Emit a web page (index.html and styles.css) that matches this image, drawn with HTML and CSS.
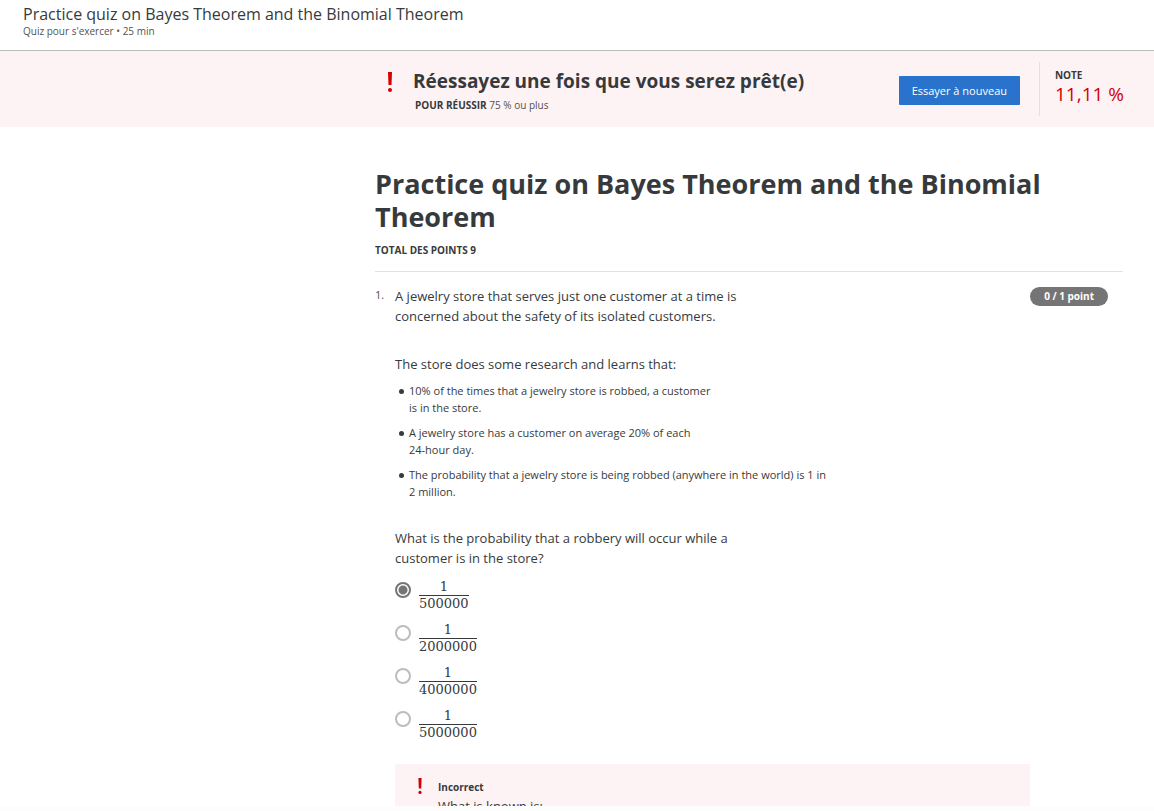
FILE: index.html
```html
<!DOCTYPE html>
<html lang="fr">
<head>
<meta charset="utf-8">
<meta name="viewport" content="width=device-width, initial-scale=1">
<title>Practice quiz on Bayes Theorem and the Binomial Theorem</title>
<link rel="stylesheet" href="styles.css">
</head>
<body class="page">
<header class="topbar">
  <div class="topbar-title">Practice quiz on Bayes Theorem and the Binomial Theorem</div>
  <div class="topbar-meta">Quiz pour s'exercer • 25 min</div>
</header>
<section class="banner">
  <svg class="banner-icon" viewBox="0 0 6 20" aria-hidden="true"><path d="M1 0h4l-.5 13h-3z"/><circle cx="3" cy="18" r="2"/></svg>
  <div class="banner-text">
    <h2 class="banner-title">Réessayez une fois que vous serez prêt(e)</h2>
    <p class="banner-goal"><strong class="banner-label">POUR RÉUSSIR</strong> <span>75 % ou plus</span></p>
  </div>
  <button class="retry" type="button">Essayer à nouveau</button>
  <div class="grade">
    <div class="grade-label">NOTE</div>
    <div class="grade-value">11,11 %</div>
  </div>
</section>
<main class="content">
  <h1 class="quiz-title">Practice quiz on Bayes Theorem and the Binomial Theorem</h1>
  <div class="total">TOTAL DES POINTS 9</div>
  <section class="question">
    <div class="number">1.</div>
    <div class="question-body">
      <div class="prompt" id="prompt">
        <p class="text">A jewelry store that serves just one customer at a time is<br>concerned about the safety of its isolated customers.</p>
        <p class="text text-spaced">The store does some research and learns that:</p>
        <ul class="facts">
          <li class="fact">10% of the times that a jewelry store is robbed, a customer<br>is in the store.</li>
          <li class="fact">A jewelry store has a customer on average 20% of each<br>24-hour day.</li>
          <li class="fact">The probability that a jewelry store is being robbed (anywhere in the world) is 1 in<br>2 million.</li>
        </ul>
        <p class="text text-spaced">What is the probability that a robbery will occur while a<br>customer is in the store?</p>
      </div>
      <div class="options" role="radiogroup" aria-labelledby="prompt">
        <label class="option"><input class="radio" type="radio" name="answer" checked><span class="fraction"><span class="numerator">1</span><span class="denominator">500000</span></span></label>
        <label class="option"><input class="radio" type="radio" name="answer"><span class="fraction"><span class="numerator">1</span><span class="denominator">2000000</span></span></label>
        <label class="option"><input class="radio" type="radio" name="answer"><span class="fraction"><span class="numerator">1</span><span class="denominator">4000000</span></span></label>
        <label class="option"><input class="radio" type="radio" name="answer"><span class="fraction"><span class="numerator">1</span><span class="denominator">5000000</span></span></label>
      </div>
      <div class="feedback">
        <svg class="feedback-icon" viewBox="0 0 6 20" aria-hidden="true"><path d="M1 0h4l-.5 13h-3z"/><circle cx="3" cy="18" r="2"/></svg>
        <div>
          <div class="feedback-title">Incorrect</div>
          <p class="text">What is known is:</p>
        </div>
      </div>
    </div>
    <div class="points">0 / 1 point</div>
  </section>
</main>
<footer class="bottom-edge"></footer>
</body>
</html>
```

FILE: styles.css
```css
* {
  box-sizing: border-box;
}

.page {
  display: flex;
  flex-direction: column;
  height: 100vh;
  margin: 0;
  overflow: hidden;
  background: #fff;
  color: #373a3c;
  font-family: "Open Sans", "Noto Sans", sans-serif;
  font-size: 13px;
}

.topbar {
  flex: none;
  padding: 4px 23px 12px;
  border-bottom: 1px solid #bdbdbd;
}

.topbar-title {
  font-size: 16px;
  line-height: 20px;
}

.topbar-meta,
.banner-goal,
.grade-label,
.total,
.feedback-title,
.points {
  font-size: 10px;
}

.topbar-meta {
  color: #525252;
  line-height: 14px;
}

.banner {
  display: flex;
  flex: none;
  align-items: flex-start;
  padding: 11px 30px 11px 387px;
  background: #fef3f4;
}

.banner-icon {
  flex: none;
  width: 6px;
  height: 20px;
  margin: 10px 20px 0 0;
  fill: #d30001;
}

.banner-text {
  flex: 1;
  padding-top: 5px;
}

.banner-title {
  margin: 0;
  font-size: 19px;
  line-height: 28px;
}

.banner-goal {
  margin: 3px 0 0 2px;
  color: #525252;
  line-height: 14px;
}

.banner-label {
  color: #373a3c;
}

.retry {
  flex: none;
  height: 29px;
  margin-top: 14px;
  padding: 0 13px;
  border: 0;
  border-radius: 1px;
  background: #2a73cc;
  color: #fff;
  font: 11px/29px "Open Sans", "Noto Sans", sans-serif;
}

.grade {
  flex: none;
  height: 54px;
  margin-left: 19px;
  padding: 6px 0 0 15px;
  border-left: 1px solid #e1e1e1;
}

.grade-label {
  font-weight: 700;
  line-height: 14px;
}

.grade-value {
  color: #d30001;
  font-size: 19px;
  line-height: 24px;
}

.content {
  flex: 1;
  min-height: 0;
  padding: 40px 31px 0 375px;
  overflow: hidden;
}

.quiz-title {
  margin: 0;
  font-size: 27px;
  line-height: 33px;
}

.total {
  padding: 10px 0 14px;
  border-bottom: 1px solid #e1e1e1;
  font-weight: 700;
  line-height: 14px;
}

.question {
  display: flex;
  align-items: flex-start;
  padding: 14px 15px 0 0;
}

.number {
  flex: none;
  width: 20px;
  color: #525252;
  font-size: 11px;
  line-height: 18px;
}

.question-body {
  flex: 1;
}

.text {
  margin: 0;
  line-height: 20px;
}

.text-spaced {
  margin-top: 28px;
}

.facts {
  margin: 8px 0 0;
  padding: 0 0 0 14px;
  list-style: none;
}

.fact {
  margin-bottom: 8px;
  font-size: 11px;
  line-height: 17px;
}

.fact::before {
  float: left;
  width: 5px;
  height: 5px;
  margin: 7px 0 0 -10px;
  border-radius: 50%;
  background: #373a3c;
  content: "";
}

.options {
  display: grid;
  gap: 10px;
  padding-top: 11px;
}

.option {
  display: flex;
  align-items: flex-start;
  justify-self: start;
  gap: 8px;
}

.radio {
  flex: none;
  width: 16px;
  height: 16px;
  margin: 3px 0 0;
  border: 2px solid #bdbdbd;
  border-radius: 50%;
  background: #fff;
  appearance: none;
}

.radio:checked {
  border-color: #757575;
  background: radial-gradient(circle, #757575 4px, #fff 5px);
}

.fraction {
  font-family: "DejaVu Serif", serif;
  line-height: 16px;
  text-align: center;
}

.numerator,
.denominator {
  display: block;
}

.denominator {
  border-top: 1px solid #373a3c;
}

.feedback {
  display: flex;
  gap: 15px;
  margin-top: 23px;
  padding: 14px 22px;
  background: #fef3f4;
}

.feedback-icon {
  flex: none;
  width: 6px;
  height: 16px;
  fill: #d30001;
}

.feedback-title {
  font-weight: 700;
  line-height: 18px;
}

.points {
  flex: none;
  margin-top: 1px;
  padding: 0 14px;
  border-radius: 10px;
  background: #757575;
  color: #fff;
  font-weight: 700;
  line-height: 19px;
}

.bottom-edge {
  flex: none;
  height: 5px;
  background: #fdfdfd;
}
```
